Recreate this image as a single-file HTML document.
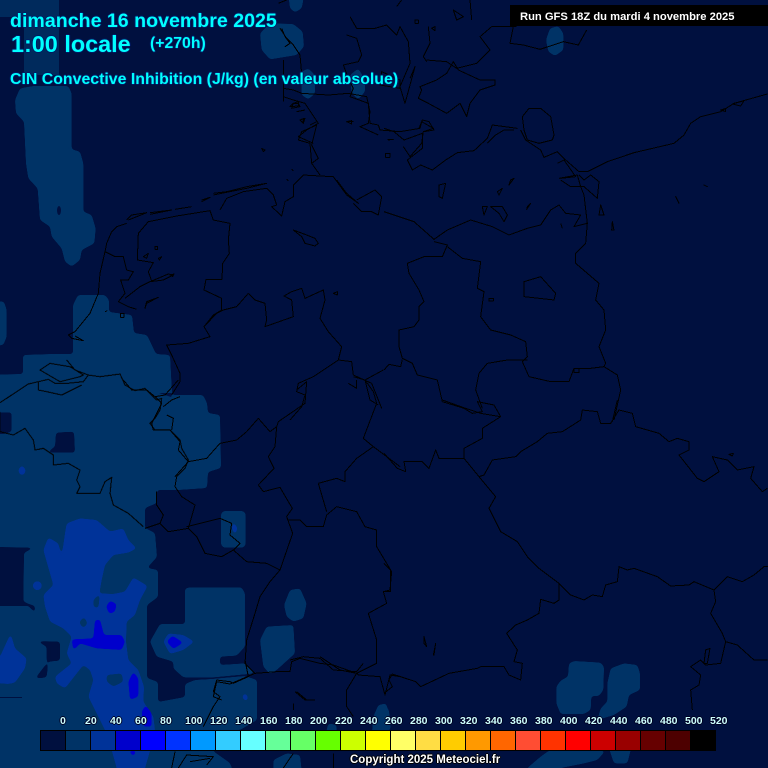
<!DOCTYPE html>
<html lang="fr">
<head>
<meta charset="utf-8">
<title>CIN Convective Inhibition</title>
<style>
html,body{margin:0;padding:0;background:#00103f}
#w{position:relative;width:768px;height:768px;overflow:hidden;background:#00103f;font-family:"Liberation Sans",Arial,sans-serif}
svg{position:absolute;left:0;top:0}
.t{position:absolute;white-space:nowrap;color:#00ffff;font-weight:bold;line-height:1;text-shadow:1px 0 0 #001a66,-1px 0 0 #001a66,0 1px 0 #001a66,0 -1px 0 #001a66}
.l{position:absolute;top:715px;font:bold 10.5px/12px "Liberation Sans",Arial,sans-serif;color:#ccffff;text-shadow:1px 0 0 #002,-1px 0 0 #002,0 1px 0 #002,0 -1px 0 #002}
.c{position:absolute;top:731px;height:19px;width:24px}
.a{fill:#003366}.b{fill:#003399}.d{fill:#0000cc}.k{fill:#00103f}
.m{fill:none;stroke:#000;stroke-width:3;stroke-linejoin:round}
</style>
</head>
<body>
<div id="w">
<svg width="768" height="768" viewBox="0 0 768 768">
<defs>
<filter id="r" filterUnits="userSpaceOnUse" x="-40" y="-40" width="848" height="848" color-interpolation-filters="sRGB">
<feGaussianBlur stdDeviation="1.6"/>
<feComponentTransfer><feFuncA type="linear" slope="16" intercept="-7.5"/></feComponentTransfer>
</filter>
</defs>
<path fill="#002a5c" d="M0 0H59V75H24V17H0Z"/>
<!-- level 1 regions -->
<g filter="url(#r)">
<path class="a" d="M-20 375L23 374V355L53 354H73V305L78 295H105L109 300V312L132 315L134 333L147 335L156 354L170 355L172 393V395H203L207 403L208 413L220 415L221 468L208 472L207 488L178 490H157V503L145 508V528L155 533L157 557L147 568L158 570V597L147 605V678L158 682V702L185 697V684L195 680L212 679L245 676L257 680V720L240 730H220L213 751L230 763L240 790H-20Z"/>
<g transform="translate(0,80) scale(.33333)">
<path class="a" d="M45 60L60 25L100 18H205L215 40V208L240 215L250 250V395L275 405L287 445L283 490L245 510L240 540L215 560L195 545L185 505L155 470L150 440L120 420L113 325L85 295L78 250L72 125L48 100Z"/>
<path class="a" d="M-60 660L12 665L20 690V770L10 795L-60 802Z"/>
</g>
<g transform="translate(250,0) scale(.33333)">
<path class="a" d="M110 -60H160V0L155 25L135 37L120 25Z"/>
<path class="a" d="M30 100L60 70L130 72L158 95L162 140L140 165L60 178L35 150Z"/>
<path class="a" d="M155 215L175 205L195 225V280L175 298L155 285Z"/>
<path class="a" d="M300 225L325 205L345 240V275L325 298L305 280Z"/>
<path class="a" d="M888 120L900 85L925 78L940 100V150L915 168L895 155Z"/>
</g>
<g transform="translate(384,400) scale(.33333)">
<path class="a" d="M552 830L555 790L570 783L650 788L660 800L658 870L645 888H622L620 930L600 942H530L517 910V860L530 842Z"/>
<path class="a" d="M670 850L680 805L720 790L760 795L768 820V870L735 885L728 920L690 945L640 960L650 925L670 905Z"/>
<path class="a" d="M0 915L15 930L20 990H0Z"/>
</g>
<g transform="translate(384,700) scale(.33333)">
<path class="a" d="M520 -30H620L600 40H540Z"/>
<path class="a" d="M495 152H665L640 180L600 190L530 204L500 280H430V204L470 170Z"/>
<path class="a" d="M670 130L690 190H730L745 130Z"/>
</g>
<g transform="translate(0,640) scale(.33333)">
<path class="a" d="M820 440V360L860 340L900 345L910 440Z"/>
<path class="a" d="M1120 230L1135 195L1160 190L1165 290H1115Z"/>
<path class="a" d="M975 290L985 250L1010 255V290Z"/>
</g>
</g>
<!-- dark cut-outs -->
<g filter="url(#r)">
<g transform="translate(0,360) scale(.33333)">
<path class="k" d="M-60 157H35V215L12 222H-60Z"/>
<path class="k" d="M168 218L222 215L225 278H140L165 260Z"/>
</g>
<g transform="translate(0,500) scale(.33333)">
<path class="k" d="M-60 140L105 143L72 158L70 305L105 318L108 423L180 425V482L145 485L140 532L105 536L140 490V440L103 420L102 335L85 318H-60Z"/>
</g>
</g>
<path class="k" d="M159 393H173L171 397Z"/>
<rect class="k" x="0" y="697" width="22" height="1"/>
<!-- upper blobs -->
<g filter="url(#r)">
<g transform="translate(0,500) scale(.33333)">
<path class="a" d="M450 425L480 372H555V265L570 262H725L735 280V440L710 467L660 470V495L735 490L765 520L640 532H550L520 505V485L470 470Z"/>
<path class="a" d="M663 40L670 33H730L737 40V135L730 143H670L663 135Z"/>
<path class="a" d="M780 420L800 380L880 375L885 460L830 510L810 522L790 500Z"/>
</g>
<g transform="translate(100,380) scale(.33333)">
<path class="a" d="M552 675L570 630L600 625L620 670L610 715L580 725L560 710Z"/>
</g>
</g>
<!-- level 2 -->
<g filter="url(#r)">
<g transform="translate(0,500) scale(.33333)">
<path class="b" d="M200 70L240 55L290 60L330 95L370 85L385 120L410 145L385 158L340 165L315 195L305 240L298 280L340 282L375 275L400 232L443 258L420 300L405 345L380 365L378 425L385 480L415 510L432 560L430 605L460 650L465 690L450 753L435 804L432 900H352L350 804L335 750L320 700L265 590L280 540L270 510L250 495L195 565L170 550L165 530L190 510L215 490L200 460L215 410L190 385L150 365L135 320L130 285L160 255L130 150L145 112L175 130L185 170L195 100Z"/>
<circle class="b" cx="112" cy="257" r="14"/>
<path class="b" d="M-60 470L0 470L32 400L45 445L80 475L75 505L45 548L25 552L-60 545Z"/>
<path class="b" d="M490 425L505 400L550 405L583 425L550 450L510 462Z"/>
<path class="b" d="M695 85L700 65L713 85L705 105Z"/>
<path class="b" d="M725 590L737 578L745 595L737 605Z"/>
</g>
<path class="b" d="M18 470L22 465L26 470L24 475H20Z"/>
</g>
<g filter="url(#r)">
<g transform="translate(0,500) scale(.33333)">
<path class="a" d="M280 300L300 280L295 325L280 320Z"/>
<path class="a" d="M237 367L252 350L263 370L250 385Z"/>
<path class="a" d="M320 525L365 520L370 545L340 560L320 545Z"/>
</g>
</g>
<ellipse class="k" cx="59" cy="210.500" rx="2" ry="4.500"/>
<!-- level 3 -->
<g filter="url(#r)">
<g transform="translate(0,500) scale(.33333)">
<path class="d" d="M318 320L330 302L350 312L345 335L328 342Z"/>
<path class="d" d="M215 418L280 415L285 360L300 358L312 405L365 405L375 425L365 450L290 445L240 430L220 452Z"/>
<path class="d" d="M385 545L400 515L415 535V590L390 600Z"/>
<path class="d" d="M425 635L437 615L455 640V680L430 680Z"/>
<path class="d" d="M500 425L517 407L550 428L520 447Z"/>
<path class="d" d="M385 752H410L400 770Z"/>
</g>
</g>

<!-- borders -->
<g shape-rendering="crispEdges">
<g transform="translate(0,80) scale(.33333)">
<path class="m" d="M315 515L300 580L295 640L270 700L225 755M335 455L320 490L315 515L345 530H370L380 570L400 575L385 600H362L375 640L355 665L385 680L410 688M375 655L420 620L450 605L490 600L520 585L505 582L455 603L445 575L460 548L412 540L415 460L445 425L530 408L630 392L640 420L690 430L685 480L688 520L668 550L666 598H618L612 630L665 655V690L640 705L612 740L630 770L565 790L500 795L515 825L540 880V905L515 945"/>
<path class="m" d="M335 455L350 440L380 430M380 420L395 405L440 398L385 420M450 398L515 390L450 403M525 388L575 380M605 360L630 352L605 365M640 340L680 335L740 320L800 310L740 325L640 345"/>
<path class="m" d="M660 390L680 355L730 335L800 325L820 345L830 375L815 380L845 408L855 365L880 350V315L910 285L960 288L1000 290L1040 345L1075 370L1040 340L1010 300M1070 360L1125 330L1145 350L1135 405L1115 395L1085 395L1060 370"/>
<path class="m" d="M850 25V65M850 25L880 30L905 40L985 45L1045 40L1100 50L1110 95L1105 130L1080 140L1135 165M935 250L955 235L935 195L950 135L905 155L895 180L930 190L935 250L960 285"/>
<path class="m" d="M745 640L765 660L795 670L800 720L795 740L880 710L875 660L852 648L875 635L905 625L915 655L970 630L975 660L960 715L985 755L1025 800L1015 840L1055 845L1060 885L1115 910L1145 985M612 740L650 700L670 690L710 680L745 640M1015 840L940 890L895 910L890 935L915 945L905 980L870 1020M1060 890L1095 900L1150 870M1095 900L1110 960L1135 975"/>
<path class="m" d="M880 450L905 470L915 490L945 498L955 490L945 475L920 465ZM435 685L440 665L475 652L440 670ZM430 530L445 520L440 535ZM475 535L485 530L478 540ZM465 500H473V508H465ZM510 585L522 582L518 590ZM785 205L795 210L790 215ZM875 268L880 272M860 298L865 302M1000 640L1012 635V645ZM315 695L322 692M362 700H372V712H362ZM225 755L205 765L215 775L250 782L225 768M1040 125L1060 125"/>
<path class="m" d="M880 70L895 65V78L870 80ZM900 120L912 115L908 128ZM930 135L950 125M890 95L915 90"/>
</g>
<g transform="translate(250,0) scale(.33333)">
<path class="m" d="M85 10L110 0M100 180V290L130 300L165 310L185 340L205 370L170 390L145 410L190 430M90 85L110 115L130 135L150 165L155 220M95 85L105 110L120 130L105 140"/>
<path class="m" d="M290 105L320 115L335 165L325 185L280 195L295 235L310 265L300 290L355 310L360 370L385 375L390 390L450 395L510 385L515 365L550 385L520 395L515 430L480 470L460 440"/>
<path class="m" d="M300 50L320 85H375L410 75L440 105L450 80L475 125L480 190L465 225L450 260L465 310L495 200L480 235"/>
<path class="m" d="M510 260L560 240L590 220L610 185L625 210L690 240H735V255L690 270L660 310L650 350L630 310L590 340L535 310L505 295L515 270Z"/>
<path class="m" d="M395 215L450 240V265L390 255Z"/>
<path class="m" d="M530 180L590 185L620 205L680 190L720 150L690 110L725 80H800M535 80L540 130L520 170L530 185"/>
<path class="m" d="M790 80L780 130L820 135L870 148L940 125L985 135L1010 90"/>
<path class="m" d="M130 310H145L150 320L125 325ZM150 360L165 355L160 370ZM290 365L305 362V372ZM415 420L430 418ZM35 445L45 450L40 455Z"/>
<path class="m" d="M440 20L455 0M610 30L640 50L620 60ZM660 0L665 60M495 60H505V70H495ZM545 85L555 80V92Z"/>
</g>
<g transform="translate(384,80) scale(.33333)">
<path class="m" d="M0 145L30 155L60 180L115 160V205L70 240L85 270L110 255L145 270L185 240L220 218L270 212L310 175L325 135L400 145M105 145L115 120L135 125L150 150L120 155M310 190L335 165L360 150L390 150M415 110L435 85L470 85L500 110L510 165L505 180L465 190L430 180L420 150Z"/>
<path class="m" d="M410 150L425 180L470 210L480 232L520 215L545 240L585 275H610L670 245L750 218L870 190L900 165L920 130L950 110L1010 95L1050 70L1150 42M1045 72L1080 62L1070 78ZM1010 90L1025 85V95Z"/>
<path class="m" d="M525 295L580 285L590 320L600 345L610 430L605 490L575 520V550L645 610L635 660L660 690L665 750L645 800L665 850L660 860L700 885L710 930L690 1020"/>
<path class="m" d="M520 250L540 240L575 290L530 295M585 285L600 300L620 285L645 305L640 355L600 320H560L530 300"/>
<path class="m" d="M0 395L45 410L90 425L150 478L190 450L260 420L325 440L375 465L430 445L470 435L500 390L525 375L545 400L590 405L570 440L610 430"/>
<path class="m" d="M150 485L190 495L175 530H120L70 550L75 580L105 630L120 665L105 680V720L90 740L45 750V800L55 835L85 850L100 885L160 900L175 965L240 985L265 1000L295 995L280 965L330 975L350 1010"/>
<path class="m" d="M190 500L235 535L290 545L280 625L300 635L290 710L320 750L380 765L425 785L430 830L415 845L435 890L500 905H555L570 865H620L660 860"/>
<path class="m" d="M430 840H370L310 850L285 880L275 930L295 985M0 870L15 853L50 860L55 838"/>
<path class="m" d="M420 605L470 590L515 640L510 660L420 650ZM165 315L185 310L175 355L165 350ZM295 380H310L300 405ZM320 380H355L370 405L360 425L345 400ZM380 300L390 295L375 315ZM340 335L355 325L345 345ZM430 380L440 370L428 388ZM650 375L660 405H645ZM685 425L690 450H683ZM875 350L885 370ZM960 315L970 320ZM530 430L535 445M10 178H28M5 220H18V232H5ZM315 655H328V663H315ZM570 865H585V878H570Z"/>
</g>
<g transform="translate(384,400) scale(.33333)">
<path class="m" d="M175 0L245 25L290 40L350 50L295 85V115L240 145V175H165L155 150L135 205L115 185H60L65 215L40 205L0 160"/>
<path class="m" d="M240 175L285 230L300 225L325 180L395 170L410 155L460 125L490 100L535 95L590 60L595 30L640 35L650 70H680L705 30L745 40L755 80L825 100L855 125L880 115L915 125V150L885 165L940 235L960 245L1005 215L985 170L1030 180L1060 210L1110 200L1100 235L1135 275L1150 265M1035 163L1048 160L1045 168Z"/>
<path class="m" d="M285 230L335 290L315 325L350 395L400 425L430 470L465 505L525 550L560 585L600 600L625 585L655 590L665 555L700 545L705 500L730 510L750 505L820 530L860 558L915 555L930 545L990 570L1030 530L1075 545L1110 525L1140 500H1152"/>
<path class="m" d="M990 570L995 605L980 640L1015 700L1025 725L1010 790L965 795L950 780L920 800L950 825L945 855L920 870L925 930M1025 725L1060 735L1110 780H1150"/>
<path class="m" d="M525 550V600L510 610L470 598L465 640L430 660L395 675L368 700L400 750L390 785L415 790L410 840L375 825L360 800H290L280 805L195 820L110 860L95 845L25 822L15 840L25 860L0 880"/>
<path class="m" d="M0 490L20 510V575H0M120 710L128 740L120 730ZM155 730L150 765H148ZM960 790L965 750L978 745L970 790Z"/>
<path class="m" d="M700 0L685 65"/>
</g>
<g transform="translate(100,380) scale(.33333)">
<path class="m" d="M230 290L225 320L245 350L285 375L265 445L205 455L180 430L135 445M170 335V375L190 405L180 430"/>
<path class="m" d="M265 445L290 470L315 520L365 530L400 510L440 545L500 550L540 570L510 605L480 650L465 700L440 780L435 850L465 880L390 912L350 905L340 950L365 960"/>
<path class="m" d="M260 440L360 415L395 430L390 465L420 490L400 510"/>
<path class="m" d="M225 290L265 245L320 235L360 190L410 180L440 155L475 115L510 155L530 140L525 200L505 230L522 265L475 315L490 335L540 322L565 365L577 385L560 410L578 460L540 570"/>
<path class="m" d="M565 420H600L620 440H670L680 405L710 380L770 395L795 440L830 450V500L875 575L870 630L850 635L860 670L805 700L830 780V850L770 880"/>
<path class="m" d="M465 880L530 875H570L575 845L600 835L660 850L700 855L770 880L775 885L840 890L855 945L870 885L900 890"/>
<path class="m" d="M655 310L710 295L735 305V275L770 235L820 200L790 175L830 70L820 35L795 0M820 200L900 260M655 310L680 395M590 30L620 5L615 70L535 125L530 140M745 10L770 25V0"/>
<path class="m" d="M70 0L95 30H140L165 50L195 45L235 0M165 50L185 70L155 130L160 150L210 150L240 185L235 210L265 245M190 80L215 60L240 50M200 105L220 115L215 150"/>
<path class="m" d="M590 935L620 960M660 830L720 870L770 880"/>
</g>
<g transform="translate(0,360) scale(.33333)">
<path class="m" d="M0 128L50 95L85 72L115 65L145 58L165 70H200L250 65L265 45L300 50L360 42L375 75L405 92L435 85L470 120L485 115L480 150L465 175L450 190L465 210H510L540 240L545 265L565 300L555 325L530 350"/>
<path class="m" d="M120 30L150 10L210 20L250 45L240 50L180 65ZM115 65V90L140 95L185 105L245 75M265 45L225 30L200 0"/>
<path class="m" d="M0 155V215L40 225L75 205L100 240L105 270L130 265L160 285V315L205 310L240 330L230 360L240 380L230 400H300L315 365L335 352L330 400L340 435L385 460L430 500"/>
</g>
<g transform="translate(0,640) scale(.33333)">
<path class="m" d="M650 120L690 125L700 130L745 110L735 60M650 120L640 155L660 170L640 200L610 260M885 155L915 180H945M880 190V210M870 60L910 50L960 55L1000 90L1070 95L1090 70M1040 170V200L1060 230M1070 100L1040 150L1040 170M515 384L525 335M535 384L560 345L640 350L620 375M570 365L630 355M1000 340V384M880 340L850 384"/>
</g>
</g>
</svg>

<div class="t" style="left:10px;top:12px;font-size:19.6px;">dimanche 16 novembre 2025</div>
<div class="t" style="left:11px;top:33px;font-size:23.4px;">1:00 locale</div>
<div class="t" style="left:150px;top:36px;font-size:15.8px;">(+270h)</div>
<div class="t" style="left:10px;top:72px;font-size:15.88px;">CIN Convective Inhibition (J/kg) (en valeur absolue)</div>

<div style="position:absolute;left:510px;top:5px;width:258px;height:21px;background:#000"></div>
<div style="position:absolute;left:520px;top:11px;font:bold 11.2px/12px 'Liberation Sans',Arial,sans-serif;color:#fff;white-space:nowrap">Run GFS 18Z du mardi 4 novembre 2025</div>

<div style="position:absolute;left:40px;top:730px;width:676px;height:21px;background:#000"></div>
<div class="c" style="left:41px;background:#00103f"></div>
<div class="c" style="left:66px;background:#003366"></div>
<div class="c" style="left:91px;background:#003399"></div>
<div class="c" style="left:116px;background:#0000cc"></div>
<div class="c" style="left:141px;background:#0000ff"></div>
<div class="c" style="left:166px;background:#0033ff"></div>
<div class="c" style="left:191px;background:#0099ff"></div>
<div class="c" style="left:216px;background:#33ccff"></div>
<div class="c" style="left:241px;background:#66ffff"></div>
<div class="c" style="left:266px;background:#66ff99"></div>
<div class="c" style="left:291px;background:#66ff66"></div>
<div class="c" style="left:316px;background:#66ff00"></div>
<div class="c" style="left:341px;background:#ccff00"></div>
<div class="c" style="left:366px;background:#ffff00"></div>
<div class="c" style="left:391px;background:#ffff66"></div>
<div class="c" style="left:416px;background:#ffdd44"></div>
<div class="c" style="left:441px;background:#ffcc00"></div>
<div class="c" style="left:466px;background:#ff9900"></div>
<div class="c" style="left:491px;background:#ff6600"></div>
<div class="c" style="left:516px;background:#ff4d33"></div>
<div class="c" style="left:541px;background:#ff3300"></div>
<div class="c" style="left:566px;background:#ff0000"></div>
<div class="c" style="left:591px;background:#cc0000"></div>
<div class="c" style="left:616px;background:#990000"></div>
<div class="c" style="left:641px;background:#660000"></div>
<div class="c" style="left:666px;background:#4d0000"></div>
<div class="c" style="left:691px;background:#000000"></div>

<div class="l" style="left:60px">0</div>
<div class="l" style="left:85px">20</div>
<div class="l" style="left:110px">40</div>
<div class="l" style="left:135px">60</div>
<div class="l" style="left:160px">80</div>
<div class="l" style="left:185px">100</div>
<div class="l" style="left:210px">120</div>
<div class="l" style="left:235px">140</div>
<div class="l" style="left:260px">160</div>
<div class="l" style="left:285px">180</div>
<div class="l" style="left:310px">200</div>
<div class="l" style="left:335px">220</div>
<div class="l" style="left:360px">240</div>
<div class="l" style="left:385px">260</div>
<div class="l" style="left:410px">280</div>
<div class="l" style="left:435px">300</div>
<div class="l" style="left:460px">320</div>
<div class="l" style="left:485px">340</div>
<div class="l" style="left:510px">360</div>
<div class="l" style="left:535px">380</div>
<div class="l" style="left:560px">400</div>
<div class="l" style="left:585px">420</div>
<div class="l" style="left:610px">440</div>
<div class="l" style="left:635px">460</div>
<div class="l" style="left:660px">480</div>
<div class="l" style="left:685px">500</div>
<div class="l" style="left:710px">520</div>

<div style="position:absolute;left:350px;top:754px;font:bold 11.5px/12px 'Liberation Sans',Arial,sans-serif;color:#fff;white-space:nowrap;text-shadow:1px 0 0 #000,-1px 0 0 #000,0 1px 0 #000,0 -1px 0 #000">Copyright 2025 Meteociel.fr</div>
</div>
</body>
</html>
